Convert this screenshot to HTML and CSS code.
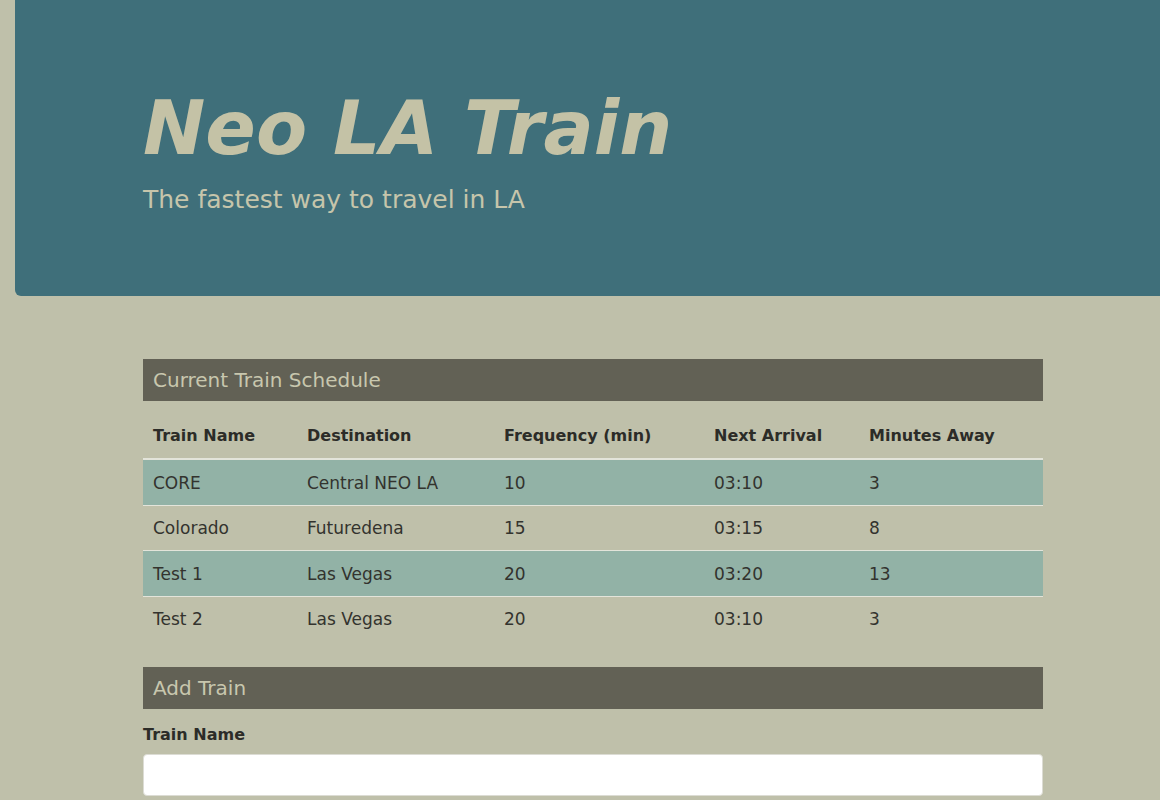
FILE: index.html
```html
<!DOCTYPE html>
<html lang="en">
<head>
<meta charset="utf-8">
<title>Neo LA Train</title>
<link rel="stylesheet" href="styles.css">
</head>
<body>
<header class="jumbotron">
  <h1 class="title">Neo LA Train</h1>
  <p class="lead">The fastest way to travel in LA</p>
</header>
<main class="container">
  <section class="panel">
    <h2 class="panel-head">Current Train Schedule</h2>
    <table class="schedule">
      <colgroup>
        <col class="c1"><col class="c2"><col class="c3"><col class="c4"><col class="c5">
      </colgroup>
      <thead>
        <tr><th>Train Name</th><th>Destination</th><th>Frequency (min)</th><th>Next Arrival</th><th>Minutes Away</th></tr>
      </thead>
      <tbody>
        <tr class="odd"><td>CORE</td><td>Central NEO LA</td><td>10</td><td>03:10</td><td>3</td></tr>
        <tr><td>Colorado</td><td>Futuredena</td><td>15</td><td>03:15</td><td>8</td></tr>
        <tr class="odd"><td>Test 1</td><td>Las Vegas</td><td>20</td><td>03:20</td><td>13</td></tr>
        <tr><td>Test 2</td><td>Las Vegas</td><td>20</td><td>03:10</td><td>3</td></tr>
      </tbody>
    </table>
  </section>
  <section class="panel add">
    <h2 class="panel-head">Add Train</h2>
    <form class="form">
      <label class="label" for="tname">Train Name</label>
      <input class="input" id="tname" type="text">
    </form>
  </section>
</main>
</body>
</html>
```
FILE: styles.css
```css
html, body {
  margin: 0;
  padding: 0;
  background: #bfc0aa;
  font-family: "DejaVu Sans", "Liberation Sans", sans-serif;
  color: #2f2f2a;
  overflow: hidden;
}

.jumbotron {
  margin: 0 0 0 15px;
  background: #3f6f7a;
  border-radius: 0 0 0 6px;
  padding: 85px 0 81px 128px;
}

.title {
  margin: 0;
  font-size: 74.5px;
  line-height: 88px;
  font-weight: bold;
  font-style: italic;
  color: #c4c2a6;
}

.lead {
  margin: 12px 0 0;
  font-size: 25px;
  line-height: 30px;
  color: #c6c5ab;
}

.container {
  width: 900px;
  margin: 63px 0 0 143px;
}

.panel-head {
  margin: 0;
  height: 42px;
  line-height: 42px;
  padding: 0 10px;
  background: #626155;
  color: #c8c7ae;
  font-size: 20px;
  font-weight: normal;
}

.schedule {
  width: 100%;
  border-collapse: separate;
  border-spacing: 0;
  font-size: 17px;
}

.c1 { width: 154px; }
.c2 { width: 197px; }
.c3 { width: 210px; }
.c4 { width: 155px; }
.c5 { width: 184px; }

.schedule th {
  text-align: left;
  font-size: 16px;
  font-weight: bold;
  line-height: 24px;
  padding: 23px 10px 10px;
  border-bottom: 1px solid #e3e4da;
  color: #2c2c28;
}

.schedule td {
  padding: 10.5px 10px 10px;
  line-height: 24px;
  border-top: 1px solid #e3e4da;
  color: #33332e;
}

.schedule tr.odd td {
  background: #92b2a6;
}

.add {
  margin-top: 26px;
}

.form {
  display: flex;
  flex-direction: column;
}

.label {
  margin: 14px 0 7px;
  font-size: 16px;
  font-weight: bold;
  line-height: 24px;
  color: #2c2c28;
}

.input {
  box-sizing: border-box;
  height: 42px;
  width: 900px;
  margin: 0;
  background: #fff;
  border: 1px solid #dcdcd4;
  border-radius: 4px;
}
```
